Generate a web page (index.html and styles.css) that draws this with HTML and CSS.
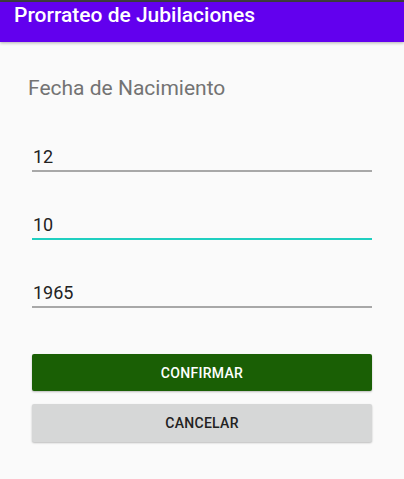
FILE: index.html
```html
<!DOCTYPE html>
<html lang="es">
<head>
<meta charset="utf-8">
<link rel="stylesheet" href="styles.css">
</head>
<body>
<div class="status"></div>
<header class="appbar">Prorrateo de Jubilaciones</header>
<main class="content">
  <div class="heading">Fecha de Nacimiento</div>
  <div class="field">12</div>
  <div class="field focused">10</div>
  <div class="field">1965</div>
  <div class="actions">
    <button class="btn primary">CONFIRMAR</button>
    <button class="btn secondary">CANCELAR</button>
  </div>
</main>
</body>
</html>
```
FILE: styles.css
```css
html, body {
  margin: 0;
  padding: 0;
  background: #fafafa;
  font-family: Roboto, "Liberation Sans", sans-serif;
  height: 100%;
}
.status {
  height: 2px;
  background: #3e3e3e;
}
.appbar {
  position: relative;
  height: 40px;
  box-sizing: border-box;
  background: #6200ee;
  color: #fff;
  font-size: 21px;
  font-weight: 500;
  line-height: 24px;
  padding: 1px 0 0 14px;
  box-shadow: 0 1px 3px rgba(0,0,0,0.3);
}
.content {
  display: flex;
  flex-direction: column;
  padding: 34px 32px 0 32px;
}
.heading {
  margin-left: -4px;
  font-size: 21px;
  line-height: 24px;
  color: #737373;
}
.field {
  margin-top: 42px;
  font-size: 18px;
  line-height: 22px;
  color: #222;
  padding: 0 0 2px 1px;
  border-bottom: 2px solid #a8a8a8;
}
.heading + .field {
  margin-top: 46px;
}
.field.focused {
  border-bottom-color: #1fcfc0;
}
.actions {
  margin-top: 46px;
  display: flex;
  flex-direction: column;
  gap: 13px;
}
.btn {
  height: 37px;
  border: none;
  border-radius: 2px;
  font-family: Roboto, "Liberation Sans", sans-serif;
  font-size: 14px;
  font-weight: 500;
  letter-spacing: 0.3px;
  box-shadow: 0 1px 2px rgba(0,0,0,0.25);
  padding: 0;
}
.btn.primary {
  background: #1a5f05;
  color: #fff;
}
.btn.secondary {
  height: 38px;
  background: #d6d7d7;
  color: #222;
}
```
